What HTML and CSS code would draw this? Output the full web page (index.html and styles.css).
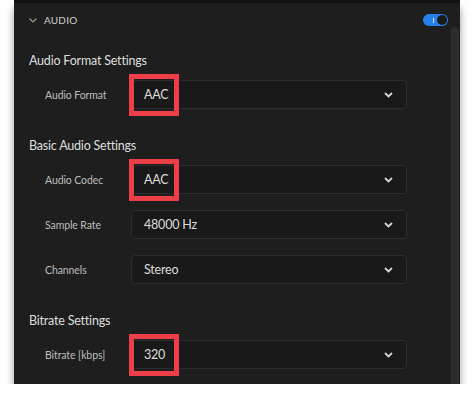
FILE: index.html
```html
<!DOCTYPE html>
<html lang="en">

<head>
  <meta charset="UTF-8" />
  <meta name="viewport" content="width=device-width, initial-scale=1.0" />
  <title>Audio Export Settings</title>
  <link rel="stylesheet" href="styles.css">
</head>

<body>
  <div class="panel">
    <div class="panel-body">
      <!-- Section header with toggle -->
      <div class="panel-header">
        <svg class="header-chevron" width="8" height="5" viewBox="0 0 8 5">
          <path d="M0.5 0.5 L4 4 L7.5 0.5" fill="none" stroke="#9a9a9a" stroke-width="1.1" />
        </svg>
        <span class="header-title">AUDIO</span>
        <span class="toggle"><span class="toggle-tick"></span><span class="toggle-knob"></span></span>
      </div>

      <h3 class="group-title first">Audio Format Settings</h3>
      <div class="row">
        <span class="row-label">Audio Format</span>
        <div class="select"><span class="highlight"></span><span class="select-value">AAC</span>
          <svg class="select-chevron" width="9" height="6" viewBox="0 0 9 6">
            <path d="M1 1 L4.5 4.5 L8 1" fill="none" stroke="#d6d6d6" stroke-width="1.8" />
          </svg>
        </div>
      </div>

      <h3 class="group-title">Basic Audio Settings</h3>
      <div class="row">
        <span class="row-label">Audio Codec</span>
        <div class="select"><span class="highlight"></span><span class="select-value">AAC</span>
          <svg class="select-chevron" width="9" height="6" viewBox="0 0 9 6">
            <path d="M1 1 L4.5 4.5 L8 1" fill="none" stroke="#d6d6d6" stroke-width="1.8" />
          </svg>
        </div>
      </div>
      <div class="row">
        <span class="row-label">Sample Rate</span>
        <div class="select"><span class="select-value">48000 Hz</span>
          <svg class="select-chevron" width="9" height="6" viewBox="0 0 9 6">
            <path d="M1 1 L4.5 4.5 L8 1" fill="none" stroke="#d6d6d6" stroke-width="1.8" />
          </svg>
        </div>
      </div>
      <div class="row">
        <span class="row-label">Channels</span>
        <div class="select"><span class="select-value">Stereo</span>
          <svg class="select-chevron" width="9" height="6" viewBox="0 0 9 6">
            <path d="M1 1 L4.5 4.5 L8 1" fill="none" stroke="#d6d6d6" stroke-width="1.8" />
          </svg>
        </div>
      </div>

      <h3 class="group-title">Bitrate Settings</h3>
      <div class="row">
        <span class="row-label">Bitrate [kbps]</span>
        <div class="select"><span class="highlight"></span><span class="select-value">320</span>
          <svg class="select-chevron" width="9" height="6" viewBox="0 0 9 6">
            <path d="M1 1 L4.5 4.5 L8 1" fill="none" stroke="#d6d6d6" stroke-width="1.8" />
          </svg>
        </div>
      </div>
    </div>

    <!-- Scrollbar track -->
    <div class="scrollbar"></div>
  </div>
</body>

</html>
```

FILE: styles.css
```css
/* Page */
body {
  margin: 0;
  background-color: #fff;
  font-family: Lato, "Open Sans", sans-serif;
}

/* Dark settings panel */
.panel {
  width: 446px;
  margin-left: 14px;
  background-color: #1e1e1e;
  border-top: 3px solid #111;
  display: flex;
  box-shadow: 0 8px 8px rgba(0, 0, 0, 0.4);
}

.panel-body {
  flex: 1;
  display: flex;
  flex-direction: column;
  padding-bottom: 15px;
}

.scrollbar {
  width: 8px;
  margin-top: 24px;
  margin-right: 1px;
  background-color: #2c2c2c;
  border-radius: 4px 4px 0 0;
}

/* Header */
.panel-header {
  height: 34px;
  display: flex;
  align-items: center;
  padding-left: 15px;
  padding-right: 3px;
}

.header-chevron {
  margin-right: 7px;
}

.header-title {
  font-size: 10px;
  color: #cfcfcf;
  letter-spacing: 0.2px;
  flex: 1;
}

.toggle {
  width: 25px;
  height: 12px;
  border-radius: 6px;
  background-color: #2680eb;
  display: flex;
  align-items: center;
  justify-content: flex-end;
  padding-right: 1px;
  box-sizing: border-box;
}

.toggle-tick {
  width: 1px;
  height: 5px;
  background-color: #d0e2ff;
  margin-right: 3px;
}

.toggle-knob {
  width: 10px;
  height: 10px;
  border-radius: 50%;
  background-color: #1a1a1a;
}

/* Group headings */
.group-title {
  margin: 27px 0 0 15px;
  font-size: 12.5px;
  letter-spacing: -0.2px;
  font-weight: normal;
  line-height: 20px;
  color: #dedede;
}

.group-title.first {
  margin-top: 14px;
}

/* Rows */
.row {
  display: flex;
  align-items: center;
  margin-top: 16px;
}

.group-title + .row {
  margin-top: 9px;
}

.row-label {
  width: 86px;
  padding-left: 31px;
  font-size: 10.5px;
  letter-spacing: -0.1px;
  color: #bdbdbd;
}

.select {
  position: relative;
  width: 276px;
  height: 29px;
  box-sizing: border-box;
  border: 1px solid #2d2d2d;
  border-radius: 4px;
  background-color: #191919;
  display: flex;
  align-items: center;
  padding-left: 12px;
  padding-right: 13px;
}

.select-value {
  flex: 1;
  font-size: 12.5px;
  letter-spacing: -0.2px;
  color: #dcdcdc;
}

/* Red callout box */
.highlight {
  position: absolute;
  left: -3px;
  top: -7px;
  width: 50px;
  height: 42px;
  box-sizing: border-box;
  border: 5px solid #ee3f48;
}
```
